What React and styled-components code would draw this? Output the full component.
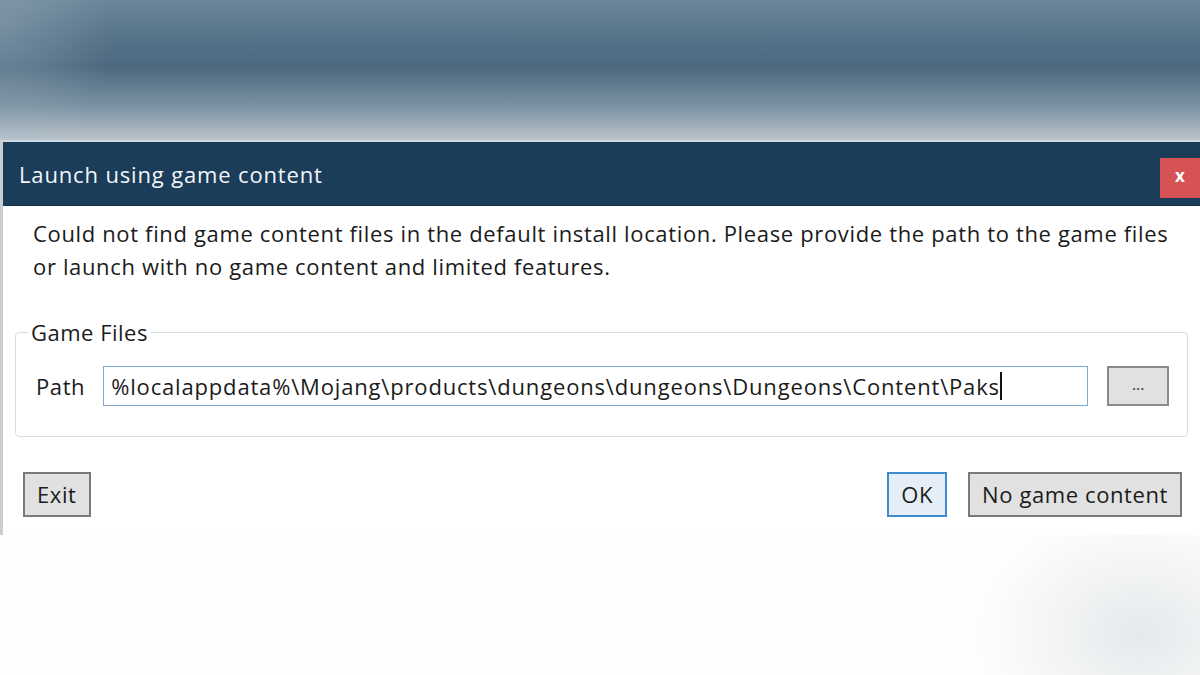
import React from "react";
import styled, { createGlobalStyle } from "styled-components";

const GlobalStyle = createGlobalStyle`
  html, body {
    margin: 0;
    padding: 0;
    width: 1200px;
    height: 675px;
    overflow: hidden;
    background: #fdfdfd;
  }
  * {
    box-sizing: border-box;
  }
`;

// the blurred launcher window behind the dialog
const Page = styled.div`
  width: 1200px;
  height: 675px;
  display: flex;
  flex-direction: column;
  font-family: "Open Sans", "Noto Sans", sans-serif;
  color: #1b1b1b;
`;

const Backdrop = styled.div`
  height: 140px;
  flex-shrink: 0;
  background:
    radial-gradient(ellipse 110px 160px at 0% 20%, rgba(170, 186, 198, 0.35), transparent),
    linear-gradient(
      to bottom,
      #6b8699 0%,
      #58748a 25%,
      #4d697f 48%,
      #7890a1 75%,
      #bac4cc 100%
    );
`;

const Dialog = styled.div`
  height: 395px;
  flex-shrink: 0;
  display: flex;
  flex-direction: column;
  background: #ffffff;
  border-left: 3px solid #c9ced2;
  border-top: 2px solid #cfdbe3;
`;

const TitleBar = styled.div`
  height: 64px;
  flex-shrink: 0;
  display: flex;
  align-items: center;
  justify-content: space-between;
  padding-left: 16px;
  background: #1c3d59;
  border-bottom: 1px solid #14304a;
`;

const Title = styled.div`
  font-size: 22px;
  color: #f2f5f8;
  letter-spacing: 0.85px;
`;

const CloseButton = styled.button`
  width: 40px;
  height: 40px;
  margin-top: 8px;
  border: none;
  background: #d65353;
  color: #ffffff;
  font-family: "Open Sans", sans-serif;
  font-weight: 700;
  font-size: 17px;
  padding: 0 0 4px 0;
  cursor: pointer;
`;

const Body = styled.div`
  flex: 1;
  display: flex;
  flex-direction: column;
  padding: 11px 12px 0 12px;
`;

const Message = styled.p`
  margin: 0 0 0 18px;
  font-size: 22px;
  line-height: 33px;
  letter-spacing: 0.65px;
`;

const Group = styled.fieldset`
  margin: 34px 0 0 0;
  padding: 19px 18px 30px 20px;
  border: 1px solid #d7dee3;
  border-radius: 4px;
  display: flex;
  align-items: center;
  gap: 18px;
`;

const Legend = styled.legend`
  font-size: 22px;
  letter-spacing: 0.5px;
  padding: 0 3px;
  margin-left: -8px;
`;

const FieldLabel = styled.span`
  font-size: 22px;
  letter-spacing: 0.6px;
`;

const PathInput = styled.div`
  width: 985px;
  height: 40px;
  display: flex;
  align-items: center;
  padding-left: 7px;
  border: 1px solid #7fa9cf;
  font-size: 22px;
  letter-spacing: 0.83px;
  white-space: nowrap;
  overflow: hidden;
`;

const Caret = styled.span`
  display: inline-block;
  width: 2px;
  height: 28px;
  background: #111;
`;

const Browse = styled.button`
  width: 62px;
  height: 40px;
  margin-left: 1px;
  background: #e1e1e1;
  border: 2px solid #8a8a8a;
  font-family: "Open Sans", sans-serif;
  font-size: 16px;
  padding-bottom: 6px;
  color: #333;
`;

const Footer = styled.div`
  display: flex;
  align-items: center;
  gap: 21px;
  margin-top: 35px;
  padding: 0 6px 0 8px;
`;

const Spacer = styled.div`
  flex: 1;
`;

const Button = styled.button`
  height: 45px;
  padding: 0 12px 2px;
  background: ${(p) => (p.$focused ? "#e5eef6" : "#e1e1e1")};
  border: 2px solid ${(p) => (p.$focused ? "#3d8bd0" : "#7a7a7a")};
  font-family: "Open Sans", sans-serif;
  font-size: 22px;
  letter-spacing: 0.6px;
  color: #1b1b1b;
`;

const Below = styled.div`
  flex: 1;
  background:
    radial-gradient(ellipse 160px 120px at 95% 70%, rgba(214, 220, 224, 0.6), transparent),
    #fdfdfd;
`;

export default function App() {
  return (
    <Page>
      <GlobalStyle />
      <Backdrop />
      <Dialog>
        <TitleBar>
          <Title>Launch using game content</Title>
          <CloseButton>x</CloseButton>
        </TitleBar>
        <Body>
          <Message>
            Could not find game content files in the default install location. Please provide the path to the game files
            <br />
            or launch with no game content and limited features.
          </Message>
          <Group>
            <Legend>Game Files</Legend>
            <FieldLabel>Path</FieldLabel>
            <PathInput>
              %localappdata%\Mojang\products\dungeons\dungeons\Dungeons\Content\Paks
              <Caret />
            </PathInput>
            <Browse>...</Browse>
          </Group>
          <Footer>
            <Button>Exit</Button>
            <Spacer />
            <Button $focused>OK</Button>
            <Button>No game content</Button>
          </Footer>
        </Body>
      </Dialog>
      <Below />
    </Page>
  );
}
